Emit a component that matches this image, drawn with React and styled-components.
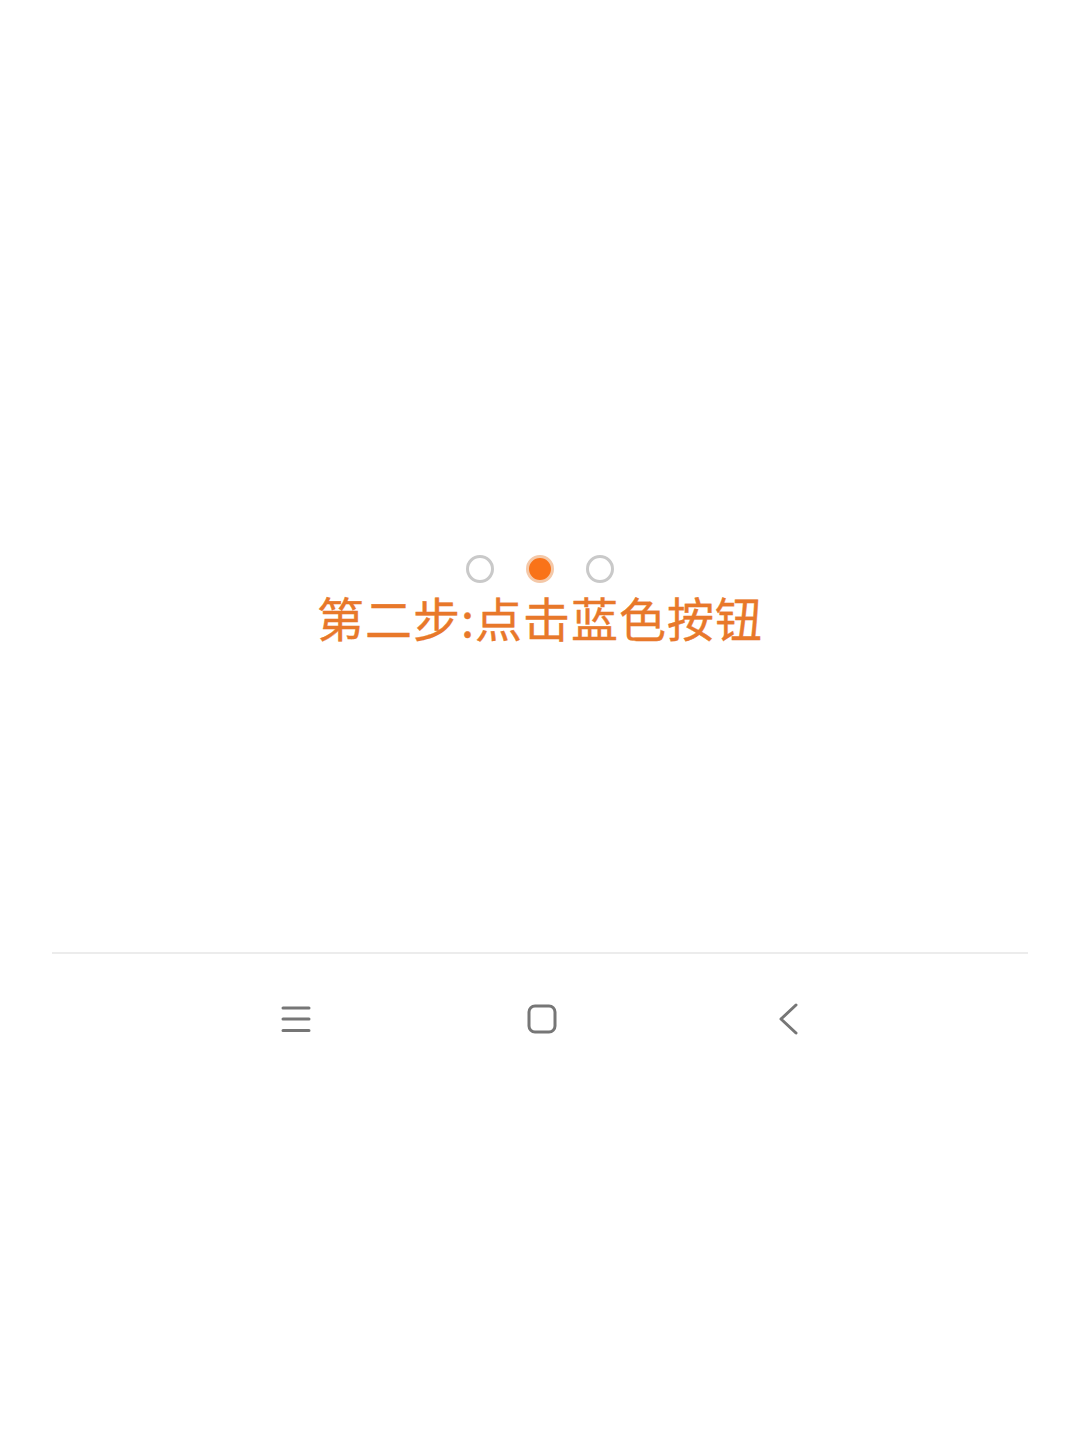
import React from 'react';
import styled, { createGlobalStyle } from 'styled-components';

const Global = createGlobalStyle`
  html, body {
    margin: 0;
    padding: 0;
    background: #ffffff;
  }
  body {
    font-family: "Noto Sans", "Noto Sans CJK SC", sans-serif;
  }
`;

const Page = styled.div`
  width: 1080px;
  min-height: 1440px;
  background: #ffffff;
  display: flex;
  flex-direction: column;
`;

const Stage = styled.div`
  height: 952px;
  box-sizing: border-box;
  padding-top: 555px;
  display: flex;
  flex-direction: column;
  align-items: center;
`;

const Dots = styled.div`
  display: flex;
  gap: 32px;
`;

const Dot = styled.span`
  width: 28px;
  height: 28px;
  box-sizing: border-box;
  border-radius: 50%;
  border: 3px solid ${(p) => (p.$active ? '#f4c8a8' : '#c9c9c9')};
  background: ${(p) => (p.$active ? '#f97319' : '#ffffff')};
`;

const Step = styled.h1`
  margin: 6px 0 0;
  font-family: "Noto Sans CJK SC", "Noto Sans", sans-serif;
  font-size: 47px;
  line-height: 56px;
  font-weight: 400;
  color: #e8782a;
  letter-spacing: 1px;
  -webkit-text-stroke: 0.4px #e8782a;
`;

const Divider = styled.div`
  height: 2px;
  margin: 0 52px;
  background: #ececec;
`;

const NavBar = styled.nav`
  height: 130px;
  padding-left: 4px;
  display: flex;
  justify-content: center;
  align-items: center;
`;

const NavItem = styled.button`
  width: 246px;
  height: 100%;
  border: 0;
  background: none;
  padding: 0;
  display: flex;
  align-items: center;
  justify-content: center;
  color: #767676;
`;

const MenuIcon = () => (
  <svg width="30" height="28" viewBox="0 0 30 28" fill="none" stroke="currentColor" strokeWidth="3" strokeLinecap="round">
    <path d="M2 3h26M2 14h26M2 25.5h26" />
  </svg>
);

const HomeIcon = () => (
  <svg width="30" height="30" viewBox="0 0 30 30" fill="none" stroke="currentColor" strokeWidth="3">
    <rect x="2" y="2" width="26" height="26" rx="6" />
  </svg>
);

const BackIcon = () => (
  <svg width="22" height="32" viewBox="0 0 22 32" fill="none" stroke="currentColor" strokeWidth="3" strokeLinecap="round" strokeLinejoin="round">
    <path d="M19 2L4 16l15 14" />
  </svg>
);

export default function App() {
  return (
    <>
      <Global />
      <Page>
        <Stage>
          <Dots>
            <Dot />
            <Dot $active />
            <Dot />
          </Dots>
          <Step>第二步:点击蓝色按钮</Step>
        </Stage>
        <Divider />
        <NavBar>
          <NavItem><MenuIcon /></NavItem>
          <NavItem><HomeIcon /></NavItem>
          <NavItem><BackIcon /></NavItem>
        </NavBar>
      </Page>
    </>
  );
}
